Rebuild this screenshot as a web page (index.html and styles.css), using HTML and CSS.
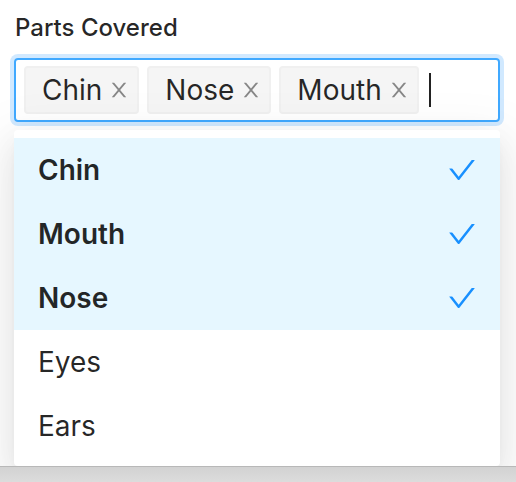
FILE: index.html
```html
<!DOCTYPE html>
<html>
<head>
<meta charset="utf-8">
<link rel="stylesheet" href="styles.css">
</head>
<body>
<div class="stage">
  <div class="field">
    <label class="label">Parts Covered</label>
    <div class="select">
      <span class="tag"><span class="tag-text">Chin</span><svg class="remove" viewBox="64 64 896 896"><path d="M563.8 512l262.5-312.9c4.4-5.2.7-13.1-6.1-13.1h-79.8c-4.7 0-9.2 2.1-12.3 5.7L511.6 449.8 295.1 191.7c-3-3.6-7.5-5.7-12.3-5.7H203c-6.8 0-10.5 7.9-6.1 13.1L459.4 512 196.9 824.9A7.95 7.95 0 00203 838h79.8c4.7 0 9.2-2.1 12.3-5.7l216.5-258.1 216.5 258.1c3 3.6 7.5 5.7 12.3 5.7h79.8c6.8 0 10.5-7.9 6.1-13.1L563.8 512z"/></svg></span>
      <span class="tag"><span class="tag-text">Nose</span><svg class="remove" viewBox="64 64 896 896"><path d="M563.8 512l262.5-312.9c4.4-5.2.7-13.1-6.1-13.1h-79.8c-4.7 0-9.2 2.1-12.3 5.7L511.6 449.8 295.1 191.7c-3-3.6-7.5-5.7-12.3-5.7H203c-6.8 0-10.5 7.9-6.1 13.1L459.4 512 196.9 824.9A7.95 7.95 0 00203 838h79.8c4.7 0 9.2-2.1 12.3-5.7l216.5-258.1 216.5 258.1c3 3.6 7.5 5.7 12.3 5.7h79.8c6.8 0 10.5-7.9 6.1-13.1L563.8 512z"/></svg></span>
      <span class="tag"><span class="tag-text">Mouth</span><svg class="remove" viewBox="64 64 896 896"><path d="M563.8 512l262.5-312.9c4.4-5.2.7-13.1-6.1-13.1h-79.8c-4.7 0-9.2 2.1-12.3 5.7L511.6 449.8 295.1 191.7c-3-3.6-7.5-5.7-12.3-5.7H203c-6.8 0-10.5 7.9-6.1 13.1L459.4 512 196.9 824.9A7.95 7.95 0 00203 838h79.8c4.7 0 9.2-2.1 12.3-5.7l216.5-258.1 216.5 258.1c3 3.6 7.5 5.7 12.3 5.7h79.8c6.8 0 10.5-7.9 6.1-13.1L563.8 512z"/></svg></span>
      <span class="caret"></span>
    </div>
    <div class="dropdown">
      <div class="option selected"><span>Chin</span><svg class="check" viewBox="64 64 896 896"><path d="M912 190h-69.9c-9.8 0-19.1 4.5-25.1 12.2L404.7 724.5 207 474a32 32 0 00-25.1-12.2H112c-6.7 0-10.4 7.7-6.3 12.9l273.9 347c12.8 16.2 37.4 16.2 50.3 0l488.4-618.9c4.1-5.1.4-12.8-6.3-12.8z"/></svg></div>
      <div class="option selected"><span>Mouth</span><svg class="check" viewBox="64 64 896 896"><path d="M912 190h-69.9c-9.8 0-19.1 4.5-25.1 12.2L404.7 724.5 207 474a32 32 0 00-25.1-12.2H112c-6.7 0-10.4 7.7-6.3 12.9l273.9 347c12.8 16.2 37.4 16.2 50.3 0l488.4-618.9c4.1-5.1.4-12.8-6.3-12.8z"/></svg></div>
      <div class="option selected"><span>Nose</span><svg class="check" viewBox="64 64 896 896"><path d="M912 190h-69.9c-9.8 0-19.1 4.5-25.1 12.2L404.7 724.5 207 474a32 32 0 00-25.1-12.2H112c-6.7 0-10.4 7.7-6.3 12.9l273.9 347c12.8 16.2 37.4 16.2 50.3 0l488.4-618.9c4.1-5.1.4-12.8-6.3-12.8z"/></svg></div>
      <div class="option"><span>Eyes</span></div>
      <div class="option"><span>Ears</span></div>
    </div>
  </div>
</div>
<div class="bottom"></div>
</body>
</html>
```

FILE: styles.css
```css
html, body {
  margin: 0;
  padding: 0;
}
body {
  width: 516px;
  height: 482px;
  overflow: hidden;
  background: #ffffff;
  font-family: Inter, "Liberation Sans", sans-serif;
  color: rgba(0, 0, 0, 0.85);
  display: flex;
  flex-direction: column;
}
.stage {
  height: 466px;
  flex: none;
  overflow: hidden;
  background: #fff;
}
.field {
  padding: 14px 16px 0 14px;
  display: flex;
  flex-direction: column;
}
.label {
  font-size: 24px;
  font-weight: 500;
  line-height: 28px;
  padding-left: 1px;
  margin-bottom: 16px;
  color: rgba(0, 0, 0, 0.85);
}
.select {
  box-sizing: border-box;
  height: 64px;
  border: 2px solid #40a9ff;
  border-radius: 4px;
  box-shadow: 0 0 0 4px rgba(24, 144, 255, 0.2);
  padding: 2px 8px;
  display: flex;
  align-items: center;
}
.tag {
  box-sizing: border-box;
  height: 48px;
  margin: 4px 8px 4px 0;
  padding: 0 8px 0 16px;
  background: #f5f5f5;
  border: 2px solid #f0f0f0;
  border-radius: 4px;
  display: flex;
  align-items: center;
  font-size: 28px;
  line-height: 44px;
}
.tag-text {
  margin-right: 7px;
}
.remove {
  width: 20px;
  height: 20px;
  fill: rgba(0, 0, 0, 0.45);
}
.caret {
  width: 2px;
  height: 34px;
  background: #222;
  margin-left: 2px;
}
.dropdown {
  margin-top: 8px;
  padding: 8px 0;
  background: #fff;
  border-radius: 4px;
  box-shadow: 0 6px 12px -8px rgba(0, 0, 0, 0.12), 0 12px 32px 0 rgba(0, 0, 0, 0.08), 0 18px 56px 16px rgba(0, 0, 0, 0.05);
}
.option {
  height: 64px;
  box-sizing: border-box;
  padding: 0 24px;
  display: flex;
  align-items: center;
  justify-content: space-between;
  font-size: 28px;
  line-height: 44px;
  color: rgba(0, 0, 0, 0.85);
}
.option.selected {
  background: #e6f7ff;
  font-weight: 600;
}
.check {
  width: 28px;
  height: 28px;
  fill: #1890ff;
}
.bottom {
  flex: 1;
  border-top: 1px solid #b8b8b8;
  background: linear-gradient(#d2d2d2, #dcdcdc);
}
```
